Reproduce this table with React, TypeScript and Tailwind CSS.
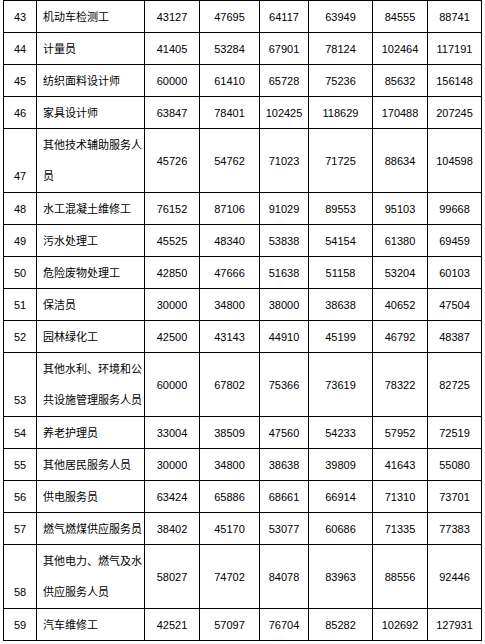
type Row = {
  no: number;
  name: string;
  values: number[];
  tall?: boolean;
};

const rows: Row[] = [
  { no: 43, name: '机动车检测工', values: [43127, 47695, 64117, 63949, 84555, 88741] },
  { no: 44, name: '计量员', values: [41405, 53284, 67901, 78124, 102464, 117191] },
  { no: 45, name: '纺织面料设计师', values: [60000, 61410, 65728, 75236, 85632, 156148] },
  { no: 46, name: '家具设计师', values: [63847, 78401, 102425, 118629, 170488, 207245] },
  { no: 47, name: '其他技术辅助服务人员', values: [45726, 54762, 71023, 71725, 88634, 104598], tall: true },
  { no: 48, name: '水工混凝土维修工', values: [76152, 87106, 91029, 89553, 95103, 99668] },
  { no: 49, name: '污水处理工', values: [45525, 48340, 53838, 54154, 61380, 69459] },
  { no: 50, name: '危险废物处理工', values: [42850, 47666, 51638, 51158, 53204, 60103] },
  { no: 51, name: '保洁员', values: [30000, 34800, 38000, 38638, 40652, 47504] },
  { no: 52, name: '园林绿化工', values: [42500, 43143, 44910, 45199, 46792, 48387] },
  { no: 53, name: '其他水利、环境和公共设施管理服务人员', values: [60000, 67802, 75366, 73619, 78322, 82725], tall: true },
  { no: 54, name: '养老护理员', values: [33004, 38509, 47560, 54233, 57952, 72519] },
  { no: 55, name: '其他居民服务人员', values: [30000, 34800, 38638, 39809, 41643, 55080] },
  { no: 56, name: '供电服务员', values: [63424, 65886, 68661, 66914, 71310, 73701] },
  { no: 57, name: '燃气燃煤供应服务员', values: [38402, 45170, 53077, 60686, 71335, 77383] },
  { no: 58, name: '其他电力、燃气及水供应服务人员', values: [58027, 74702, 84078, 83963, 88556, 92446], tall: true },
  { no: 59, name: '汽车维修工', values: [42521, 57097, 76704, 85282, 102692, 127931] },
];

const colWidths = [33, 108, 55, 60, 49, 64, 55, 54];

export default function App() {
  return (
    <div
      className="bg-white text-black w-[485px] h-[644px] overflow-hidden pl-[3px]"
      style={{ fontFamily: '"Liberation Sans", "Noto Sans CJK SC", sans-serif' }}
    >
      <table className="table-fixed border-collapse w-[479px] text-[11px] leading-[14px]">
        <colgroup>
          {colWidths.map((w, i) => (
            <col key={i} style={{ width: w }} />
          ))}
        </colgroup>
        <tbody>
          {rows.map((r) => (
            <tr key={r.no} className={r.tall ? 'h-[64px]' : 'h-[32px]'}>
              <td
                className={`border border-black text-center p-0 ${
                  r.tall ? 'align-bottom pb-[9px]' : 'align-middle'
                }`}
              >
                {r.no}
              </td>
              <td
                className={`border border-black pl-[6px] pr-0 py-0 align-middle ${
                  r.tall ? 'leading-[31px]' : ''
                }`}
              >
                {r.name}
              </td>
              {r.values.map((v, i) => (
                <td key={i} className="border border-black text-center align-middle p-0">
                  {v}
                </td>
              ))}
            </tr>
          ))}
        </tbody>
      </table>
    </div>
  );
}
